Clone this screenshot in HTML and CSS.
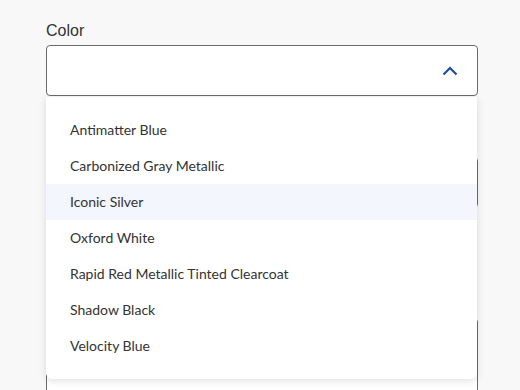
FILE: index.html
```html
<!DOCTYPE html>
<html lang="en">
<head>
<meta charset="utf-8">
<link rel="stylesheet" href="styles.css">
</head>
<body>
<form class="form">
  <div class="field field-open">
    <label class="label">Color</label>
    <div class="select">
      <svg class="chevron" width="16" height="10" viewBox="0 0 16 10"><path d="M1.5 8.5 L8 2 L14.5 8.5" fill="none" stroke="#1d4f9c" stroke-width="2.2"/></svg>
    </div>
    <ul class="menu">
      <li class="option">Antimatter Blue</li>
      <li class="option">Carbonized Gray Metallic</li>
      <li class="option option-active">Iconic Silver</li>
      <li class="option">Oxford White</li>
      <li class="option">Rapid Red Metallic Tinted Clearcoat</li>
      <li class="option">Shadow Black</li>
      <li class="option">Velocity Blue</li>
    </ul>
  </div>
  <div class="field field-second">
    <div class="select"></div>
  </div>
  <div class="field field-third">
    <div class="select select-tall"></div>
  </div>
</form>
</body>
</html>
```
FILE: styles.css
```css
html, body {
  margin: 0;
  padding: 0;
  background: #f8f8f8;
  font-family: "Liberation Sans", Arial, sans-serif;
  color: #333;
}
.form {
  width: 432px;
  margin-left: 46px;
  padding-top: 21px;
  padding-bottom: 20px;
  display: flex;
  flex-direction: column;
}
.field {
  position: relative;
  display: flex;
  flex-direction: column;
  gap: 5px;
}
.field-second {
  margin-top: 61px;
}
.field-third {
  margin-top: 110px;
}
.label {
  font-size: 16px;
  line-height: 19px;
  color: #333;
}
.select {
  box-sizing: border-box;
  height: 51px;
  border: 1px solid #6b6b6b;
  border-radius: 4px;
  background: #fff;
  display: flex;
  align-items: center;
  justify-content: flex-end;
  padding-right: 19px;
}
.select-tall {
  height: 90px;
}
.chevron {
  display: block;
  margin-top: 1px;
}
.menu {
  position: absolute;
  z-index: 5;
  left: 0;
  top: 76px;
  width: 431px;
  margin: 0;
  padding: 15px 0;
  list-style: none;
  background: #fff;
  border-radius: 0 0 6px 6px;
  box-shadow: 0 2px 8px rgba(0, 0, 0, 0.12);
}
.option {
  height: 36px;
  line-height: 36px;
  padding-left: 24px;
  font-family: Lato, "Liberation Sans", sans-serif;
  font-size: 14px;
  color: #333;
}
.option-active {
  background: #f3f6fd;
}
```
